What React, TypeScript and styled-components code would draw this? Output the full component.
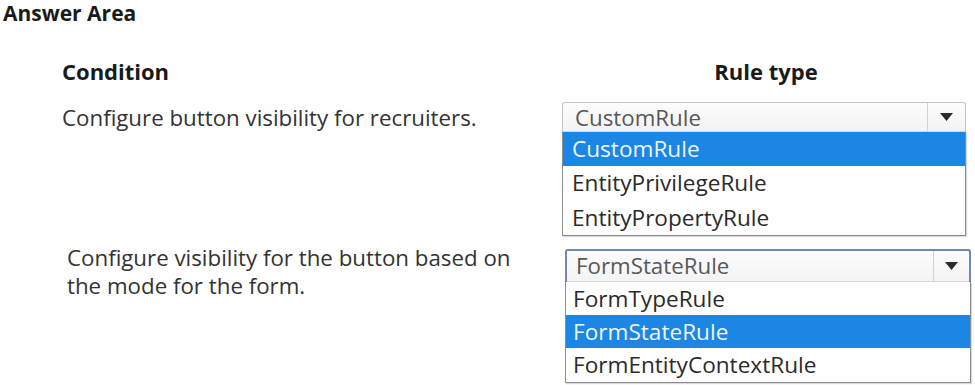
import React from "react";
import styled, { createGlobalStyle } from "styled-components";

const Global = createGlobalStyle`
  html, body { margin: 0; padding: 0; background: #ffffff; }
  body { font-family: "Open Sans", "Noto Sans", sans-serif; color: #2a2a2a; }
`;

const Page = styled.div`
  width: 975px;
  height: 385px;
  overflow: hidden;
  background: #fff;
`;

const Title = styled.div`
  font-weight: 700;
  font-size: 21px;
  line-height: 24px;
  padding: 1px 0 0 3px;
  color: #1a1a1a;
`;

const Grid = styled.div`
  display: grid;
  grid-template-columns: 500px 413px;
  padding-left: 62px;
  margin-top: 33px;
`;

const Header = styled.div<{ $center?: boolean }>`
  font-weight: 700;
  font-size: 22px;
  line-height: 26px;
  color: #1a1a1a;
  text-align: ${(p) => (p.$center ? "center" : "left")};
  padding-right: ${(p) => (p.$center ? "5px" : "0")};
  margin-bottom: 18px;
`;

const Condition = styled.div<{ $dx?: number; $top?: number }>`
  font-size: 22.3px;
  line-height: 28px;
  color: #333;
  padding-left: ${(p) => p.$dx ?? 0}px;
  padding-top: ${(p) => p.$top ?? 0}px;
`;

const Dropdown = styled.div<{ $dx?: number; $w: number; $mt?: number }>`
  margin-left: ${(p) => p.$dx ?? 0}px;
  margin-top: ${(p) => p.$mt ?? 0}px;
  width: ${(p) => p.$w}px;
  display: flex;
  flex-direction: column;
`;

const Select = styled.div<{ $focus?: boolean }>`
  height: ${(p) => (p.$focus ? 31 : 29)}px;
  display: flex;
  align-items: stretch;
  background: linear-gradient(#fcfcfc, #f3f3f3);
  border: ${(p) => (p.$focus ? "2px solid #7189b2" : "1px solid #c4c4c4")};
  border-bottom: none;
  border-radius: 3px 3px 0 0;
`;

const SelectText = styled.div<{ $pad: number }>`
  flex: 1;
  font-size: 22.3px;
  line-height: 30px;
  color: #585858;
  padding-left: ${(p) => p.$pad}px;
  border-bottom: 1px solid #d6d6d6;
  white-space: nowrap;
`;

const ArrowBox = styled.div<{ $w: number }>`
  width: ${(p) => p.$w}px;
  border-left: 1px solid #d2d2d2;
  border-bottom: 1px solid #d6d6d6;
  display: flex;
  align-items: center;
  justify-content: center;
`;

const List = styled.div`
  border: 1px solid #8c8c8c;
  border-top: none;
  background: #fff;
  box-shadow: 1px 1px 1px rgba(0, 0, 0, 0.15);
`;

const Option = styled.div<{ $sel?: boolean; $h: number; $pad: number }>`
  height: ${(p) => p.$h}px;
  line-height: ${(p) => p.$h}px;
  font-size: 22.6px;
  padding-left: ${(p) => p.$pad}px;
  white-space: nowrap;
  background: ${(p) => (p.$sel ? "#1b86e3" : "#fff")};
  color: ${(p) => (p.$sel ? "#eef7ff" : "#2a2a2a")};
`;

const Arrow = () => (
  <svg width="13" height="8" viewBox="0 0 13 8">
    <path d="M0 0 H13 L6.5 8 Z" fill="#2b2b2b" />
  </svg>
);

type DDProps = {
  value: string;
  options: string[];
  selected: number;
  focus?: boolean;
  dx?: number;
  w: number;
  mt?: number;
  rowH: number;
  selPad: number;
  optPad: number;
  arrowW: number;
};

const DropdownBox = ({ value, options, selected, focus, dx, w, mt, rowH, selPad, optPad, arrowW }: DDProps) => (
  <Dropdown $dx={dx} $w={w} $mt={mt}>
    <Select $focus={focus}>
      <SelectText $pad={selPad}>{value}</SelectText>
      <ArrowBox $w={arrowW}>
        <Arrow />
      </ArrowBox>
    </Select>
    <List>
      {options.map((o, i) => (
        <Option key={o} $sel={i === selected} $h={rowH} $pad={optPad}>
          {o}
        </Option>
      ))}
    </List>
  </Dropdown>
);

export default function App() {
  return (
    <Page>
      <Global />
      <Title>Answer Area</Title>
      <Grid>
        <Header>Condition</Header>
        <Header $center>Rule type</Header>
        <Condition $top={2}>Configure button visibility for recruiters.</Condition>
        <DropdownBox
          value="CustomRule"
          options={["CustomRule", "EntityPrivilegeRule", "EntityPropertyRule"]}
          selected={0}
          w={404}
          rowH={34.3}
          selPad={12}
          optPad={9}
          arrowW={37}
        />
        <Condition $dx={5} $top={8}>
          Configure visibility for the button based on
          <br />
          the mode for the form.
        </Condition>
        <DropdownBox
          value="FormStateRule"
          options={["FormTypeRule", "FormStateRule", "FormEntityContextRule"]}
          selected={1}
          focus
          dx={3}
          w={406}
          mt={13}
          rowH={33.3}
          selPad={9}
          optPad={7}
          arrowW={35}
        />
      </Grid>
    </Page>
  );
}
